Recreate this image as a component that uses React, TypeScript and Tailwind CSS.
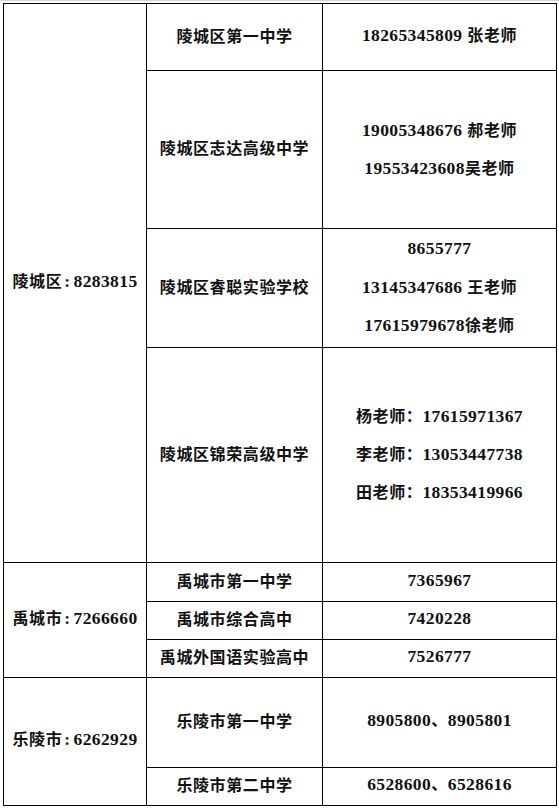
import React from 'react';

const cjk = "font-['Noto_Sans_CJK_SC',sans-serif] text-[16px] font-bold tracking-[0.6px]";
const num = "font-['Liberation_Serif',serif] text-[17.5px] font-bold tracking-[0.4px]";

// split a cell's text into ascii runs (serif digits) and cjk runs
function Txt({ s }: { s: string }) {
  const parts = s.split(/([\x00-\x7F]+)/).filter(Boolean);
  return (
    <span className="whitespace-pre">
      {parts.map((p, i) =>
        /^[\x00-\x7F]+$/.test(p) ? (
          <span key={i} className={num}>
            {p}
          </span>
        ) : (
          <span key={i} className={cjk}>
            {p}
          </span>
        ),
      )}
    </span>
  );
}

// district label with the narrow colon
function Area({ name, tel }: { name: string; tel: string }) {
  return (
    <span className="whitespace-nowrap">
      <span className={cjk}>{name}</span>
      <span className={`${num} ml-[2px] mr-[3px]`}>:</span>
      <span className={num}>{tel}</span>
    </span>
  );
}

function Lines({ items }: { items: string[] }) {
  return (
    <div className="flex flex-col items-center">
      {items.map((t) => (
        <div key={t} className="leading-[38px] h-[38px]">
          <Txt s={t} />
        </div>
      ))}
    </div>
  );
}

const cell = 'border-[1.5px] border-black text-center align-middle p-0 pb-[4px] text-[#111]';

export default function App() {
  return (
    <div className="w-[559px] h-[808px] bg-white border-t border-[#d4d4d4] pt-[2px] pl-[3px]">
      <table className="table-fixed border-collapse w-[553px]">
        <colgroup>
          <col className="w-[143px]" />
          <col className="w-[176px]" />
          <col className="w-[234px]" />
        </colgroup>
        <tbody>
          <tr className="h-[67px]">
            <td className={cell} rowSpan={4}>
              <Area name="陵城区" tel="8283815" />
            </td>
            <td className={cell}>
              <Txt s="陵城区第一中学" />
            </td>
            <td className={cell}>
              <Txt s="18265345809 张老师" />
            </td>
          </tr>
          <tr className="h-[158px]">
            <td className={cell}>
              <Txt s="陵城区志达高级中学" />
            </td>
            <td className={cell}>
              <Lines items={['19005348676 郝老师', '19553423608吴老师']} />
            </td>
          </tr>
          <tr className="h-[119px]">
            <td className={cell}>
              <Txt s="陵城区睿聪实验学校" />
            </td>
            <td className={cell}>
              <Lines items={['8655777', '13145347686 王老师', '17615979678徐老师']} />
            </td>
          </tr>
          <tr className="h-[215px]">
            <td className={cell}>
              <Txt s="陵城区锦荣高级中学" />
            </td>
            <td className={cell}>
              <Lines items={['杨老师：17615971367', '李老师：13053447738', '田老师：18353419966']} />
            </td>
          </tr>
          <tr className="h-[39px]">
            <td className={cell} rowSpan={3}>
              <Area name="禹城市" tel="7266660" />
            </td>
            <td className={cell}>
              <Txt s="禹城市第一中学" />
            </td>
            <td className={cell}>
              <Txt s="7365967" />
            </td>
          </tr>
          <tr className="h-[38px]">
            <td className={cell}>
              <Txt s="禹城市综合高中" />
            </td>
            <td className={cell}>
              <Txt s="7420228" />
            </td>
          </tr>
          <tr className="h-[38px]">
            <td className={cell}>
              <Txt s="禹城外国语实验高中" />
            </td>
            <td className={cell}>
              <Txt s="7526777" />
            </td>
          </tr>
          <tr className="h-[90px]">
            <td className={cell} rowSpan={2}>
              <Area name="乐陵市" tel="6262929" />
            </td>
            <td className={cell}>
              <Txt s="乐陵市第一中学" />
            </td>
            <td className={cell}>
              <Txt s="8905800、8905801" />
            </td>
          </tr>
          <tr className="h-[38px]">
            <td className={cell}>
              <Txt s="乐陵市第二中学" />
            </td>
            <td className={cell}>
              <Txt s="6528600、6528616" />
            </td>
          </tr>
        </tbody>
      </table>
    </div>
  );
}
